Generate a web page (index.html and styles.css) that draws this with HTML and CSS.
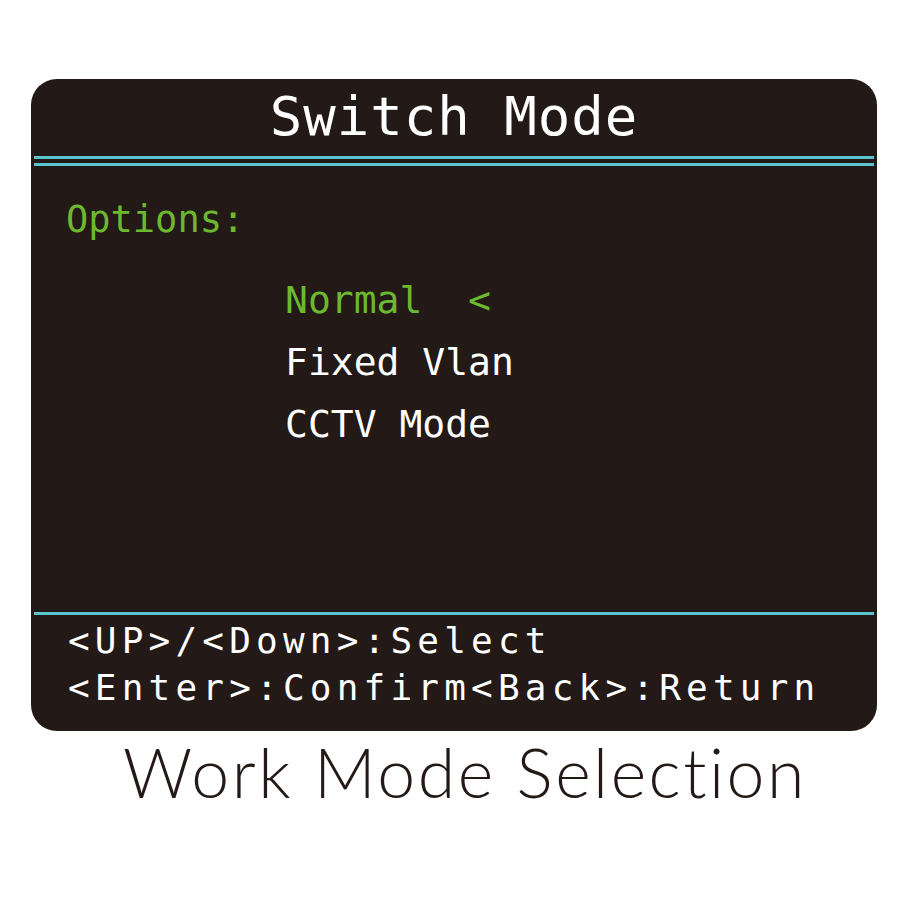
FILE: index.html
```html
<!DOCTYPE html>
<html lang="en">
<head>
    <meta charset="UTF-8">
    <title>Work Mode Selection</title>
    <link rel="stylesheet" href="styles.css">
</head>
<body>
    <div class="screen">
        <div class="screen-title">Switch Mode</div>
        <div class="double-rule"></div>

        <div class="screen-body">
            <div class="label">Options:</div>
            <ul class="options">
                <li class="selected">Normal&nbsp;&nbsp;&lt;</li>
                <li>Fixed Vlan</li>
                <li>CCTV Mode</li>
            </ul>
        </div>

        <div class="rule"></div>
        <div class="keys">
            <div>&lt;UP&gt;/&lt;Down&gt;:Select</div>
            <div>&lt;Enter&gt;:Confirm&lt;Back&gt;:Return</div>
        </div>
    </div>
    <p class="caption">Work Mode Selection</p>
</body>
</html>
```

FILE: styles.css
```css
body {
    margin: 0;
    background-color: #fff;
    font-family: "DejaVu Sans Mono", monospace;
}
.screen {
    margin: 79px 0 0 31px;
    width: 846px;
    height: 652px;
    background-color: #231916;
    border-radius: 26px;
    color: #fff;
    display: flex;
    flex-direction: column;
}
.screen-title {
    height: 77px;
    line-height: 76px;
    font-size: 54px;
    letter-spacing: 1px;
    text-align: center;
}
/* two thin cyan lines under the title */
.double-rule {
    margin: 0 3px;
    height: 4px;
    border-top: 3px solid #5cc3cf;
    border-bottom: 3px solid #5cc3cf;
}
.rule {
    margin: 0 3px;
    height: 0;
    border-top: 3px solid #5cc3cf;
}
.screen-body {
    flex: 1;
}
.label {
    margin: 32px 0 0 35px;
    font-size: 37px;
    line-height: 44px;
    color: #6cb92f;
}
.options {
    list-style: none;
    margin: 27px 0 0 254px;
    padding: 0;
    font-size: 38px;
    line-height: 62px;
}
.options .selected {
    color: #6cb92f;
}
.keys {
    padding: 2px 0 20px 37px;
    font-size: 36px;
    line-height: 47px;
    letter-spacing: 5.2px;
}
.caption {
    margin: 0;
    padding-left: 30px;
    text-align: center;
    font-family: Lato, "Liberation Sans", sans-serif;
    font-weight: 300;
    font-size: 68px;
    letter-spacing: 2.5px;
    color: #231916;
}
```
